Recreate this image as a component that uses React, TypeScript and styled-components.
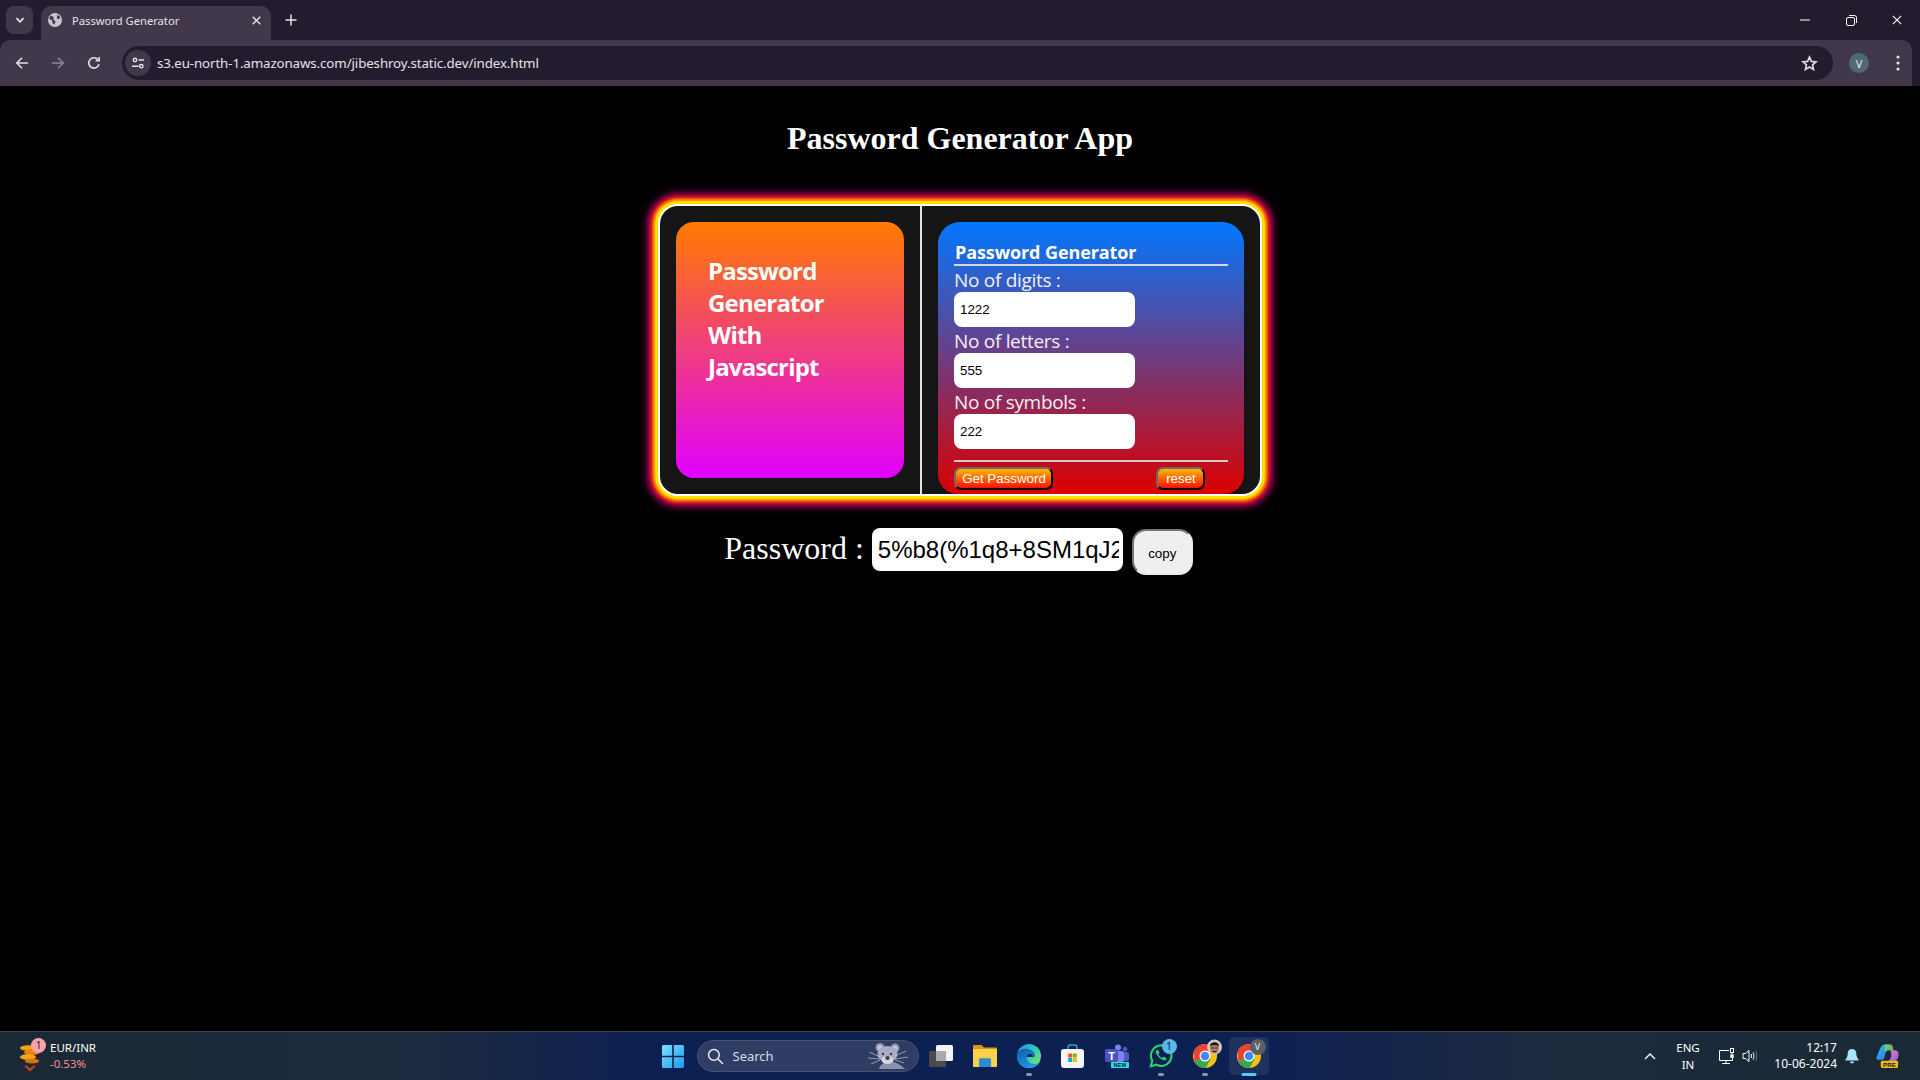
import React from "react";
import styled, { createGlobalStyle } from "styled-components";

const Global = createGlobalStyle`
  html, body { margin: 0; padding: 0; height: 100%; background: #000; overflow: hidden; }
  #root { height: 100%; }
  * { box-sizing: border-box; }
`;

const UI = `"Noto Sans", "Open Sans", sans-serif`;
const SEGOE = `"Open Sans", "Noto Sans", sans-serif`;

const Screen = styled.div`
  width: 1920px; height: 1080px; display: flex; flex-direction: column; background: #000;
`;

/* Browser chrome */
const TabStrip = styled.div`
  height: 40px; flex: none; background: #231c2e; display: flex; align-items: flex-start; padding: 6px 0 0 6px;
`;
const TabMenu = styled.div`
  width: 27px; height: 28px; border-radius: 8px; background: #41384b; color: #e5e2ea; display: flex; align-items: center; justify-content: center;
`;
const Tab = styled.div`
  margin-left: 8px; width: 230px; height: 34px; background: #41384b; border-radius: 10px 10px 0 0; display: flex; align-items: center; padding: 0 10px 6px 7px; color: #e6e3ea;
  font: 400 11.2px ${UI};
  & > span { margin-left: 10px; flex: 1; }
`;
const NewTab = styled.div`
  margin-left: 10px; width: 20px; height: 28px; display: flex; align-items: center; justify-content: center; color: #e6e3ea;
`;
const WinButtons = styled.div`
  margin-left: auto; margin-top: -6px; display: flex; height: 40px; align-items: center; color: #fff;
`;
const WinButton = styled.div`
  width: 46px; height: 40px; display: flex; align-items: center; justify-content: center;
`;
const Toolbar = styled.div`
  height: 46px; flex: none; background: #41384b; display: flex; align-items: center; padding: 0 0 0 4px; border-radius: 10px 10px 0 0; color: #e3e0e8; width: 1912px;
`;
const ToolbarBack = styled.div`
  background: #231c2e; flex: none; height: 46px;
`;
const NavBtn = styled.div<{ $dim?: boolean }>`
  width: 36px; height: 30px; display: flex; align-items: center; justify-content: center; color: ${p => (p.$dim ? "#8b8494" : "#e3e0e8")};
`;
const Omnibox = styled.div`
  margin-left: 10px; width: 1711px; height: 34px; background: #231c2e; border-radius: 17px; display: flex; align-items: center; padding: 0 15px 0 3px; font: 400 13.3px ${UI}; color: #e6e3ea;
`;
const SiteIcon = styled.div`
  width: 26px; height: 26px; border-radius: 50%; background: #41384b; display: flex; align-items: center; justify-content: center; margin-right: 6px;
`;
const Url = styled.span` flex: 1; letter-spacing: -0.1px; `;
const Avatar = styled.div`
  margin-left: 16px; width: 20px; height: 20px; border-radius: 50%; background: #4e6a72; color: #e8eef0; font: 400 11px ${UI}; display: flex; align-items: center; justify-content: center; flex: none;
`;
const Kebab = styled.div`
  margin-left: 19px; width: 20px; display: flex; justify-content: center; color: #e3e0e8; flex: none;
`;

/* Page */
const Page = styled.main`
  flex: 1; min-height: 0; background: #000; color: #fff; display: flex; flex-direction: column; align-items: center;
`;
const Title = styled.h1`
  margin: 34px 0 0; font: 700 32px/37px "Liberation Serif", serif; color: #fff;
`;
const Card = styled.section`
  margin-top: 47px; width: 604px; height: 292px; background: #151515; border: 2px solid #fff; border-radius: 20px; display: flex;
  box-shadow: 0 0 0 3px #ffdf00, 0 0 2px 5px #ff9a00, 0 0 3px 7px #f0301a, 0 0 5px 10px #b00040, 0 0 8px 12px #50003a;
  padding: 16px 0 0 16px;
`;
const LeftPanel = styled.div`
  width: 228px; height: 256px; flex: none; border-radius: 18px; background: linear-gradient(180deg, #ff7b00 0%, #e000ff 100%); padding: 33px 32px 0;
  font: 700 24px/32px ${SEGOE}; letter-spacing: -0.8px; color: #fff;
`;
const Divider = styled.div`
  width: 2px; margin: -16px 16px 0 16px; background: #e4e4e4; flex: none;
`;
const RightPanel = styled.form`
  width: 306px; flex: none; border-radius: 22px 22px 20px 20px; background: linear-gradient(180deg, #0278ff 0%, #db0000 100%); padding: 20px 16px 0 16px; height: 272px;
  display: flex; flex-direction: column;
`;
const FormTitle = styled.div`
  font: 700 18px/20px ${SEGOE}; letter-spacing: -0.1px; color: #fff; border-bottom: 2px solid #d9d6e3; height: 24px; flex: none; padding-left: 1px;
`;
const FieldLabel = styled.label`
  display: block; margin-top: 2px; font: 400 19px/24px ${SEGOE}; letter-spacing: -0.3px; color: #f4f0f4; height: 24px; flex: none;
`;
const Field = styled.input`
  display: block; width: 181px; height: 35px; flex: none; border: none; outline: none; border-radius: 8px; background: #fff; color: #000; padding: 0 6px; font: 400 13.33px "Liberation Sans", sans-serif;
`;
const Rule = styled.div`
  height: 2px; flex: none; background: #d4cccc; margin-top: 11px;
`;
const Actions = styled.div`
  display: flex; margin-top: 5px;
`;
const GradBtn = styled.button<{ $offset?: number; $w: number }>`
  width: ${p => p.$w}px; height: 23px; padding: 0 0 0 1px; border-radius: 7px; border-style: solid; border-width: 2px; border-color: #6a6a6a #000 #000 #6a6a6a; background: linear-gradient(180deg, #ffb800 0%, #fa1000 100%); color: #fff; font: 400 13.33px "Liberation Sans", sans-serif; margin-left: ${p => p.$offset ?? 0}px; white-space: nowrap;
`;
const PasswordRow = styled.div`
  margin-top: 32px; margin-right: 3px; display: flex; align-items: flex-start; height: 48px;
`;
const PasswordLabel = styled.span`
  font: 400 32px/37px "Liberation Serif", serif; color: #fff; margin-top: 2px; margin-right: 8px;
`;
const PasswordField = styled.input`
  width: 251px; height: 43px; border: none; outline: none; border-radius: 8px; background: #fff; color: #000; padding: 0 4px 0 6px; font: 400 24px "Liberation Sans", sans-serif;
`;
const CopyBtn = styled.button`
  margin-left: 9px; width: 61px; height: 46px; margin-top: 1px; border-radius: 14px; border: 2px solid; border-color: #767676 #ececec #ececec #767676; background: #efefef; color: #000; font: 400 13.33px "Liberation Sans", sans-serif; padding: 3px 0 0;
`;

/* Taskbar */
const Taskbar = styled.footer`
  height: 49px; flex: none; border-top: 1px solid #3a434d; background: linear-gradient(90deg, #1b2935 0%, #1b2a3e 22%, #0d2052 33%, #0d2052 66%, #1b2a3e 80%, #1b2935 100%); display: grid; grid-template-columns: 1fr auto 1fr; align-items: center; color: #fff; font: 400 11.5px ${UI};
`;
const Widget = styled.div`
  display: flex; align-items: center; padding-left: 19px;
`;
const WidgetIcon = styled.div`
  position: relative; width: 31px; height: 34px;
`;
const CoinSvg = styled.svg`
  position: absolute; left: 0; top: 4px;
`;
const WidgetBadge = styled.div`
  position: absolute; left: 12px; top: -1px; width: 15px; height: 15px; border-radius: 50%; background: #f9a4ad; color: #1b1b1b; font: 400 10px/15px ${UI}; text-align: center;
`;
const WidgetText = styled.div`
  line-height: 16px; font-size: 11.5px;
`;
const WidgetDelta = styled.div` color: #f58f9b; `;
const Center = styled.div`
  display: flex; align-items: center; height: 48px; margin-left: 7px;
`;
const StartBtn = styled.div` width: 32px; height: 32px; display: flex; align-items: center; justify-content: center; margin-right: 8px; `;
const SearchBox = styled.div`
  width: 222px; height: 32px; border-radius: 16px; background: #2f3d65; border: 1px solid #45527a; display: flex; align-items: center; padding: 0 10px 0 9px; color: #d6dbe6; font: 400 13px ${UI}; gap: 9px;
  & > span { flex: 1; }
`;
const IconSlot = styled.div<{ $active?: boolean }>`
  position: relative; width: 44px; height: 42px; display: flex; align-items: center; justify-content: center;
  &::before {
    content: ""; position: absolute; inset: 2px; border-radius: 5px;
    background: ${p => (p.$active ? "rgba(255,255,255,0.08)" : "transparent")};
  }
  & > svg { position: relative; }
`;
const RunDot = styled.div<{ $active?: boolean }>`
  position: absolute; bottom: 1px; left: 50%; transform: translateX(-50%); width: ${p => (p.$active ? 15 : 6)}px; height: 3px; border-radius: 2px; background: ${p => (p.$active ? "#5cc8f5" : "#8d97ab")};
`;
const SlotBadge = styled.div`
  position: absolute; right: 6px; top: 4px; width: 15px; height: 15px; border-radius: 50%; background: #5cb8ea; color: #0c2040; font: 400 10.5px/15px ${UI}; text-align: center;
`;
const PhotoSvg = styled.svg`
  position: absolute !important; right: 5px; top: 4px;
`;
const VBadge = styled.div`
  position: absolute; right: 5px; top: 4px; width: 16px; height: 16px; border-radius: 50%; background: #5a5f68; color: #eee; font: 400 9px/16px ${UI}; text-align: center;
`;
const Tray = styled.div`
  display: flex; align-items: center; justify-content: flex-end; padding-right: 20px;
`;
const LangBox = styled.div`
  margin-left: 14px; width: 36px; text-align: center; line-height: 17px; font-size: 11.5px;
`;
const Clock = styled.div`
  width: 78px; text-align: right; line-height: 16px; font-size: 12px;
`;
const TrayGap = styled.div<{ $w: number }>` margin-left: ${p => p.$w}px; display: flex; align-items: center; `;

const Chevron = () => (
  <svg width="10" height="10" viewBox="0 0 10 10" fill="none" stroke="currentColor" strokeWidth="1.8"><path d="M1.5 3.2 5 6.800l3.500-3.600" /></svg>
);
const Globe = () => (
  <svg width="14" height="14" viewBox="0 0 12 12"><circle cx="6" cy="6" r="6" fill="#c9c5ce" /><path d="M2 2.200 5 3.500 4.500 5.500 6.500 7l-1 3L4 9 3.500 6.500 1 5zM8 1.500l2.500 2-1 1.800L7.500 4.500z" fill="#41384b" /></svg>
);
const CloseX = ({ s = 10, w = 1.5 }: { s?: number; w?: number }) => (
  <svg width={s} height={s} viewBox="0 0 10 10" stroke="currentColor" strokeWidth={w}><path d="M.8.8l8.400 8.400M9.200.8.8 9.200" /></svg>
);
const Plus = () => (
  <svg width="12" height="12" viewBox="0 0 12 12" stroke="currentColor" strokeWidth="1.5"><path d="M6 .5v11M.5 6h11" /></svg>
);
const Back = () => (
  <svg width="14" height="14" viewBox="0 0 14 14" fill="none" stroke="currentColor" strokeWidth="1.6"><path d="M13 7H2M7 1.800 1.800 7 7 12.200" /></svg>
);
const Forward = () => (
  <svg width="14" height="14" viewBox="0 0 14 14" fill="none" stroke="currentColor" strokeWidth="1.6"><path d="M1 7h11M7 1.800 12.200 7 7 12.200" /></svg>
);
const Reload = () => (
  <svg width="14" height="14" viewBox="0 0 14 14" fill="none" stroke="currentColor" strokeWidth="1.6"><path d="M12 8.200A5.200 5.200 0 1 1 11 3.600" /><path d="M12.200 1v3.600H8.600" /></svg>
);
const Tune = () => (
  <svg width="14" height="14" viewBox="0 0 14 14" fill="none" stroke="#e6e3ea" strokeWidth="1.4"><circle cx="4" cy="4" r="1.7" /><path d="M7.500 4H13M1 10.200h6.500" /><circle cx="10.300" cy="10.200" r="1.7" /></svg>
);
const Star = () => (
  <svg width="17" height="17" viewBox="0 0 24 24" fill="none" stroke="#dcd8e0" strokeWidth="2.4"><path d="M12 3l2.700 6 6.500.7-4.900 4.300 1.400 6.400L12 17l-5.700 3.400 1.400-6.400L2.800 9.700 9.300 9z" /></svg>
);
const Dots = () => (
  <svg width="4" height="16" viewBox="0 0 4 16" fill="currentColor"><circle cx="2" cy="2" r="1.6" /><circle cx="2" cy="8" r="1.6" /><circle cx="2" cy="14" r="1.6" /></svg>
);
const Restore = () => (
  <svg width="11" height="11" viewBox="0 0 11 11" fill="none" stroke="currentColor" strokeWidth="1"><rect x=".5" y="2.500" width="8" height="8" rx="1.5" /><path d="M3 .5h5.500a2 2 0 0 1 2 2V8" /></svg>
);
const Minimize = () => (
  <svg width="10" height="2" viewBox="0 0 10 2" stroke="currentColor"><path d="M0 1h10" /></svg>
);
const Coins = () => (
  <CoinSvg width="24" height="30" viewBox="0 0 24 30">
    <ellipse cx="9" cy="5" rx="8" ry="2.800" fill="#f7a11c" />
    <ellipse cx="13" cy="9" rx="8" ry="3" fill="#e98410" />
    <ellipse cx="9" cy="14" rx="8" ry="3" fill="#f7a11c" />
    <ellipse cx="13" cy="18" rx="7" ry="2.600" fill="#d9730c" />
    <path d="M7 22l4 3.500L15 22l1.600 1.500L11 28.500 5.400 23.500z" fill="#c8401c" />
  </CoinSvg>
);
const Windows = () => (
  <svg width="24" height="24" viewBox="0 0 24 24">
    <defs><linearGradient id="w" x1="0" y1="0" x2="1" y2="1"><stop offset="0" stopColor="#7ee0ff" /><stop offset="1" stopColor="#1a9bee" /></linearGradient></defs>
    <path fill="url(#w)" d="M1 2.500C1 1.700 1.700 1 2.500 1h8.700v10.700H1zM12.800 1h8.700c.8 0 1.500.7 1.500 1.500v9.200H12.800zM1 13.300h10.200V24H2.500C1.700 24 1 23.300 1 22.500zM12.800 13.300H23v9.200c0 .8-.7 1.500-1.500 1.500h-8.700z" />
  </svg>
);
const Magnifier = () => (
  <svg width="17" height="17" viewBox="0 0 16 16" fill="none" stroke="#e8ebf2" strokeWidth="1.4"><circle cx="6.500" cy="6.500" r="5" /><path d="M10.200 10.200 15 15" /></svg>
);
const Koala = () => (
  <svg width="40" height="30" viewBox="0 0 40 30">
    <circle cx="12" cy="6.500" r="4.500" fill="#8f93b4" /><circle cx="27" cy="7" r="4.500" fill="#8f93b4" />
    <circle cx="12" cy="6.500" r="2.500" fill="#c6c6d8" /><circle cx="27" cy="7" r="2.500" fill="#c6c6d8" />
    <ellipse cx="19.500" cy="13" rx="10" ry="8" fill="#a8abc8" />
    <path d="M11 28c2-8 14-12 26 0z" fill="#8c90ae" />
    <ellipse cx="19.500" cy="19" rx="6" ry="4" fill="#d6d4e0" />
    <circle cx="15" cy="13" r="1.100" fill="#1a1a22" /><circle cx="23" cy="13" r="1.100" fill="#1a1a22" />
    <ellipse cx="19.500" cy="17" rx="2.200" ry="2" fill="#3c3c4c" />
    <path d="M1 11l11 5M0 17l12 1M3 23l9-4M38 10l-11 5M40 16l-13 2M36 22l-9-3" stroke="#d8d8e2" strokeWidth=".6" />
  </svg>
);
const TaskView = () => (
  <svg width="24" height="22" viewBox="0 0 24 22">
    <rect x="7" y="0" width="17" height="16" rx="1.500" fill="#f3f3f5" />
    <rect x="0" y="6" width="17" height="16" rx="1.500" fill="#4b4b4f" />
    <rect x="7" y="6" width="10" height="10" fill="#a9a9ad" />
  </svg>
);
const Folder = () => (
  <svg width="24" height="22" viewBox="0 0 24 22">
    <path d="M0 1.500C0 .7.500 0 1.300 0h7.200l2.500 2.500h12c.6 0 1 .4 1 1V8H0z" fill="#d99a10" />
    <path d="M0 4h24v17c0 .6-.4 1-1 1H1c-.6 0-1-.4-1-1z" fill="#fcd04b" />
    <path d="M6 14.500c0-.8.500-1.300 1.300-1.300h9.400c.8 0 1.300.5 1.300 1.300V22H6z" fill="#2c8dd6" />
  </svg>
);
const Edge = () => (
  <svg width="24" height="24" viewBox="0 0 24 24">
    <defs>
      <linearGradient id="e1" x1="0.2" y1="0" x2="1" y2="0.7"><stop offset="0" stopColor="#1a9be0" /><stop offset="0.55" stopColor="#34cfb0" /><stop offset="1" stopColor="#6fe070" /></linearGradient>
      <linearGradient id="e2" x1="0" y1="0" x2="0.6" y2="1"><stop offset="0" stopColor="#0e5aa8" /><stop offset="1" stopColor="#1e9be8" /></linearGradient>
    </defs>
    <circle cx="12" cy="12" r="12" fill="url(#e1)" />
    <path d="M0 12C0 6 6 4 11 5c5 1 8 4 7 8h-8c-1 4 3 7 7 7 2.500 0 4.500-.8 6-2-2 3.800-6 6-11 6C5 24 0 18.500 0 12z" fill="url(#e2)" />
    <path d="M10 13c-.5-2 1-3 3-3s3 1 3 3z" fill="#0d2052" />
  </svg>
);
const Store = () => (
  <svg width="23" height="24" viewBox="0 0 23 24">
    <path d="M7 7V3.500C7 2 8 1 9.500 1h4C15 1 16 2 16 3.500V7" fill="none" stroke="#2ba5e0" strokeWidth="1.5" />
    <rect x="0" y="5" width="23" height="19" rx="3" fill="#f6f6f6" />
    <rect x="7.200" y="9.500" width="4" height="4" fill="#f25022" /><rect x="11.800" y="9.500" width="4" height="4" fill="#7fba00" />
    <rect x="7.200" y="14" width="4" height="4" fill="#00a4ef" /><rect x="11.800" y="14" width="4" height="4" fill="#ffb900" />
  </svg>
);
const Teams = () => (
  <svg width="24" height="24" viewBox="0 0 24 24">
    <circle cx="13" cy="3.500" r="3" fill="#7b83eb" /><circle cx="20" cy="5" r="2.300" fill="#5059c9" />
    <rect x="15" y="8" width="9" height="9" rx="2" fill="#5059c9" /><rect x="7" y="7" width="12" height="11" rx="2" fill="#7b83eb" />
    <rect x="0" y="5" width="13" height="13" rx="1.500" fill="#4b53bc" />
    <text x="6.500" y="15.500" textAnchor="middle" fontSize="11" fontWeight="700" fontFamily="Liberation Sans" fill="#fff">T</text>
    <rect x="6" y="18" width="18" height="6" rx="1" fill="#2de0e8" />
    <text x="15" y="23" textAnchor="middle" fontSize="5.500" fontWeight="700" fontFamily="Liberation Sans" fill="#0a2030">NEW</text>
  </svg>
);
const Whatsapp = () => (
  <svg width="24" height="24" viewBox="0 0 22 22">
    <path d="M1.600 20.500 3 15.300A9.400 9.400 0 1 1 6.800 19z" fill="#0d2052" stroke="#25d366" strokeWidth="1.900" />
    <path d="M7.300 5.500c-1 .6-1.300 2-.7 3.300 1.200 2.700 3.300 4.800 6 5.900 1.400.6 2.700.2 3.300-.8.300-.5.200-.9-.2-1.100l-1.900-1c-.4-.2-.7-.1-.9.2l-.6.8c-1.500-.6-3-2-3.700-3.500l.7-.7c.3-.3.3-.6.2-.9l-.9-1.900c-.2-.4-.6-.5-.9-.3z" fill="#25d366" />
  </svg>
);
const ChromeLogo = ({ id }: { id: string }) => (
  <svg width="24" height="24" viewBox="0 0 48 48">
    <defs><clipPath id={id}><circle cx="24" cy="24" r="24" /></clipPath></defs>
    <g clipPath={`url(#${id})`}>
      <rect width="48" height="48" fill="#fbc116" />
      <path d="M24 24 3 36 0 0h48v14H24z" fill="#ea4335" />
      <path d="M24 24 3 36l-5 14h26L35.500 30z" fill="#34a853" />
    </g>
    <circle cx="24" cy="24" r="11" fill="#fff" /><circle cx="24" cy="24" r="8.500" fill="#4285f4" />
  </svg>
);
const PhotoBadge = () => (
  <PhotoSvg width="15" height="16" viewBox="0 0 15 16">
    <circle cx="7.500" cy="8" r="7.500" fill="#cfc8bc" />
    <ellipse cx="7.500" cy="9" rx="4.500" ry="5.500" fill="#a87f62" />
    <path d="M3 7c0-5 9-5 9 0-3-1.500-6-1.500-9 0z" fill="#1c1410" />
    <path d="M4.500 9h2.300M8.200 9h2.300M5.500 12.500h4" stroke="#2a1c14" strokeWidth="1" />
  </PhotoSvg>
);
const Caret = () => (
  <svg width="12" height="8" viewBox="0 0 12 8" fill="none" stroke="#fff" strokeWidth="1.4"><path d="M1 7 6 2l5 5" /></svg>
);
const Monitor = () => (
  <svg width="18" height="17" viewBox="0 0 18 17" fill="none" stroke="#fff" strokeWidth="1"><path d="M11 2.500H1.500v10h13V9" /><path d="M8 12.500V15M4 15.500h8" /><rect x="12.500" y=".5" width="3" height="4" /><path d="M14 4.500V9" /><rect x="12.800" y="7" width="2.400" height="2.400" fill="#fff" /></svg>
);
const Speaker = () => (
  <svg width="17" height="14" viewBox="0 0 17 14" fill="none" stroke="#fff" strokeWidth="1"><path d="M1 4.500h2.500L7 1.500v11L3.500 9.500H1z" /><path d="M9 5c.8 1.200.8 2.800 0 4M11 3.500c1.300 2 1.300 5 0 7" /><path d="M13.500 2c1.800 3 1.800 7 0 10" stroke="#777" /></svg>
);
const Bell = () => (
  <svg width="14" height="15" viewBox="0 0 14 15" fill="#a9e3fb"><path d="M7 0c2.800 0 4.300 2 4.300 4.500 0 3 1 4.500 2.200 6 .3.400 0 1-.5 1H1c-.5 0-.8-.6-.5-1 1.200-1.500 2.200-3 2.200-6C2.700 2 4.200 0 7 0zM5 12.500h4c0 1.200-.8 2-2 2s-2-.8-2-2z" /></svg>
);
const Copilot = () => (
  <svg width="24" height="26" viewBox="0 0 25 26">
    <defs>
      <linearGradient id="c1" x1="0" y1="0" x2="1" y2="1"><stop offset="0" stopColor="#2ac3f0" /><stop offset="1" stopColor="#2d6fe0" /></linearGradient>
      <linearGradient id="c2" x1="0" y1="0" x2="1" y2="1"><stop offset="0" stopColor="#f27ec0" /><stop offset="1" stopColor="#8a5be0" /></linearGradient>
    </defs>
    <path d="M9 1h6c-3 2-5 8-6 13-.4 2-1.500 3-3.500 3H2C.5 17 .2 15.500 1 13.500 3 8 5 1 9 1z" fill="url(#c1)" />
    <path d="M14 7h6c2 0 3 1 3.500 3.500.5 3-2 9.500-7 9.500H11c3-2 5-5 5-8s0-4-2-5z" fill="url(#c2)" />
    <path d="M9 1h6c2 0 3 2 3 6h-4C12 7 10 8 9 10z" fill="#7fd06a" opacity=".85" />
    <rect x="5" y="18" width="18" height="7.500" rx="1.500" fill="#f5b81a" />
    <text x="14" y="24" textAnchor="middle" fontSize="6.500" fontWeight="700" fontFamily="Liberation Sans" fill="#222">PRE</text>
  </svg>
);

export default function App() {
  return (
    <Screen>
      <Global />
      <TabStrip>
        <TabMenu><Chevron /></TabMenu>
        <Tab><Globe /><span>Password Generator</span><CloseX s={9} /></Tab>
        <NewTab><Plus /></NewTab>
        <WinButtons>
          <WinButton><Minimize /></WinButton>
          <WinButton><Restore /></WinButton>
          <WinButton><CloseX s={10} w={1.1} /></WinButton>
        </WinButtons>
      </TabStrip>
      <ToolbarBack>
        <Toolbar>
          <NavBtn><Back /></NavBtn>
          <NavBtn $dim><Forward /></NavBtn>
          <NavBtn><Reload /></NavBtn>
          <Omnibox>
            <SiteIcon><Tune /></SiteIcon>
            <Url>s3.eu-north-1.amazonaws.com/jibeshroy.static.dev/index.html</Url>
            <Star />
          </Omnibox>
          <Avatar>V</Avatar>
          <Kebab><Dots /></Kebab>
        </Toolbar>
      </ToolbarBack>
      <Page>
        <Title>Password Generator App</Title>
        <Card>
          <LeftPanel>Password<br />Generator<br />With<br />Javascript</LeftPanel>
          <Divider />
          <RightPanel>
            <FormTitle>Password Generator</FormTitle>
            <FieldLabel>No of digits :</FieldLabel>
            <Field defaultValue="1222" />
            <FieldLabel>No of letters :</FieldLabel>
            <Field defaultValue="555" />
            <FieldLabel>No of symbols :</FieldLabel>
            <Field defaultValue="222" />
            <Rule />
            <Actions>
              <GradBtn type="button" $w={99}>Get Password</GradBtn>
              <GradBtn type="button" $w={49} $offset={103}>reset</GradBtn>
            </Actions>
          </RightPanel>
        </Card>
        <PasswordRow>
          <PasswordLabel>Password :</PasswordLabel>
          <PasswordField readOnly defaultValue="5%b8(%1q8+8SM1qJ2kP9x" />
          <CopyBtn type="button">copy</CopyBtn>
        </PasswordRow>
      </Page>
      <Taskbar>
        <Widget>
          <WidgetIcon><Coins /><WidgetBadge>1</WidgetBadge></WidgetIcon>
          <WidgetText>EUR/INR<WidgetDelta>-0.53%</WidgetDelta></WidgetText>
        </Widget>
        <Center>
          <StartBtn><Windows /></StartBtn>
          <SearchBox><Magnifier /><span>Search</span><Koala /></SearchBox>
          <IconSlot><TaskView /></IconSlot>
          <IconSlot><Folder /></IconSlot>
          <IconSlot><Edge /><RunDot /></IconSlot>
          <IconSlot><Store /></IconSlot>
          <IconSlot><Teams /></IconSlot>
          <IconSlot><Whatsapp /><SlotBadge>1</SlotBadge><RunDot /></IconSlot>
          <IconSlot><ChromeLogo id="c-a" /><PhotoBadge /><RunDot /></IconSlot>
          <IconSlot $active><ChromeLogo id="c-b" /><VBadge>V</VBadge><RunDot $active /></IconSlot>
        </Center>
        <Tray>
          <Caret />
          <LangBox>ENG<br />IN</LangBox>
          <TrayGap $w={12}><Monitor /></TrayGap>
          <TrayGap $w={6}><Speaker /></TrayGap>
          <Clock>12:17<br />10-06-2024</Clock>
          <TrayGap $w={8}><Bell /></TrayGap>
          <TrayGap $w={17}><Copilot /></TrayGap>
        </Tray>
      </Taskbar>
    </Screen>
  );
}
